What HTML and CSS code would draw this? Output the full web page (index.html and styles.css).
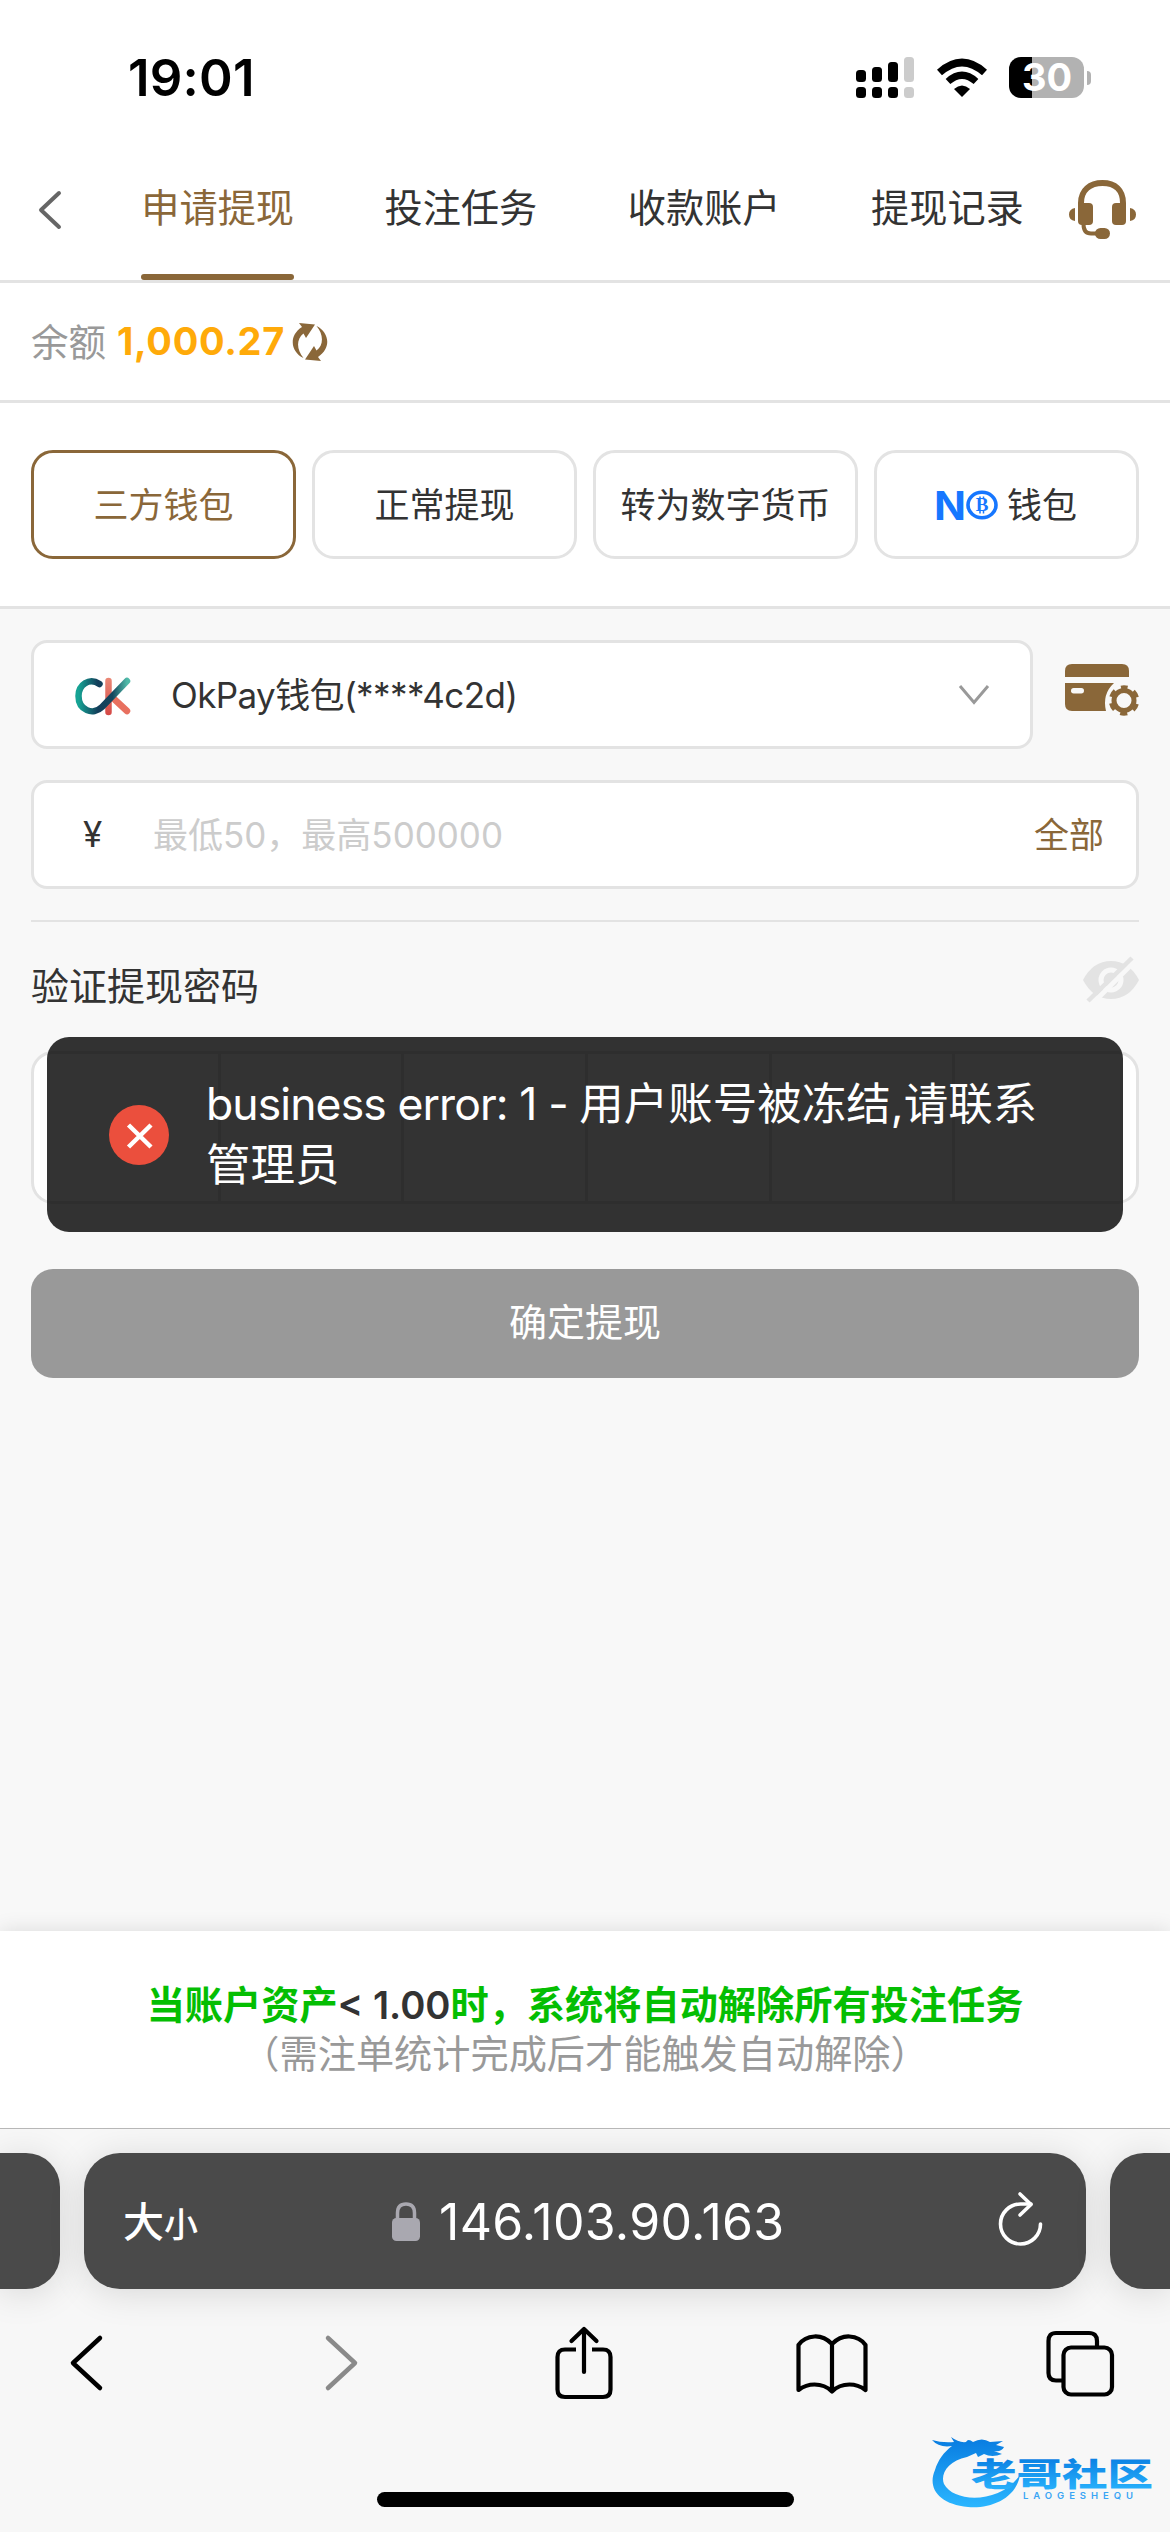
FILE: index.html
```html
<!DOCTYPE html>
<html lang="zh-CN">
<head>
    <meta charset="UTF-8">
    <meta name="viewport" content="width=device-width, initial-scale=1.0">
    <title>申请提现</title>
    <link rel="stylesheet" href="styles.css">
</head>
<body>

    <!-- 状态栏 -->
    <div class="status-bar">
        <span class="time">19:01</span>
        <div class="status-icons">
            <svg class="signal" width="59" height="42" viewBox="0 0 59 42">
                <rect x="0" y="13" width="10" height="12" rx="3.5"/>
                <rect x="16" y="10" width="10" height="15" rx="3.5"/>
                <rect x="32" y="5" width="10" height="20" rx="3.5"/>
                <rect x="48" y="0" width="10" height="25" rx="3.5" fill="#ccc"/>
                <rect x="0" y="30" width="10" height="11" rx="3.5"/>
                <rect x="16" y="30" width="10" height="11" rx="3.5"/>
                <rect x="32" y="30" width="10" height="11" rx="3.5"/>
                <rect x="48" y="30" width="10" height="11" rx="3.5" fill="#ccc"/>
            </svg>
            <svg class="wifi" width="52" height="42" viewBox="0 0 52 42">
                <path d="M3.5 15.5Q26-4.5 48.5 15.5" fill="none" stroke="#000" stroke-width="7.5"/>
                <path d="M12 24.5Q26 12 40 24.5" fill="none" stroke="#000" stroke-width="7"/>
                <path d="M18 32Q26 25 34 32L26 40Z"/>
            </svg>
            <div class="battery"><span>30</span></div>
            <div class="battery-tip"></div>
        </div>
    </div>

    <!-- 顶部导航 -->
    <div class="nav">
        <svg class="back" width="28" height="42" viewBox="0 0 28 42">
            <path d="M23 4L5 21L23 38" fill="none" stroke="#666" stroke-width="4" stroke-linecap="round" stroke-linejoin="round"/>
        </svg>
        <div class="tabs">
            <div class="tab active"><span>申请提现</span></div>
            <div class="tab"><span>投注任务</span></div>
            <div class="tab"><span>收款账户</span></div>
            <div class="tab"><span>提现记录</span></div>
        </div>
        <svg class="headset" width="67" height="60" viewBox="0 0 67 60" fill="#8a6739">
            <path d="M12 26V23C12 10 21 3 33.5 3S54 10 54 23V26" fill="none" stroke="#8a6739" stroke-width="6"/>
            <path d="M9 23H20Q24 23 24 27V41Q24 45 20 45H13Q9 45 9 41Z"/>
            <path d="M57 23H47Q43 23 43 27V41Q43 45 47 45H53Q57 45 57 41Z"/>
            <path d="M6 28V41Q0 40 0 34.5T6 28ZM61 28V41Q67 40 67 34.5T61 28Z"/>
            <path d="M14.5 44Q14.5 53.5 22 53.5H30" fill="none" stroke="#8a6739" stroke-width="4"/>
            <rect x="26" y="48" width="15" height="11" rx="5.5"/>
        </svg>
    </div>

    <!-- 余额 -->
    <div class="balance">
        <span class="balance-label">余额</span>
        <strong>1,000.27</strong>
        <svg width="36" height="38" viewBox="0 0 36 38" fill="#8a6739">
            <path d="M7 0L23 1.5L14 15L11.5 10.500C4 16 4.500 27 11.500 35C-1 29-4 13 10 4Z"/>
            <path d="M29 38L13 36.500L22 23L24.500 27.500C32 22 31.500 11 24.500 3C37 9 40 25 26 34Z"/>
        </svg>
    </div>

    <!-- 提现方式 -->
    <div class="methods">
        <div class="method selected"><span>三方钱包</span></div>
        <div class="method"><span>正常提现</span></div>
        <div class="method"><span>转为数字货币</span></div>
        <div class="method">
            <svg class="no-logo" width="62" height="30" viewBox="0 0 62 30">
                <text x="-2" y="29.500" class="no-letter" textLength="32" lengthAdjust="spacingAndGlyphs">N</text>
                <ellipse cx="46" cy="15" rx="14" ry="12.700" fill="none" stroke="#1677ff" stroke-width="3.600"/>
                <text x="46" y="21" class="no-coin">B</text>
                <path d="M44 6.500V9M47.500 6.500V9M44 21V23.500M47.500 21V23.500" stroke="#1677ff" stroke-width="1.500"/>
            </svg>
            <span>钱包</span>
        </div>
    </div>

    <!-- 提现表单 -->
    <div class="form">
        <div class="wallet-row">
            <div class="field wallet">
                <svg class="ck-logo" width="56" height="42" viewBox="0 0 56 42" fill="none" stroke-width="6.5" stroke-linecap="round">
                    <defs>
                        <linearGradient id="ckTeal" x1="0" y1="0" x2="1" y2="0">
                            <stop offset="0" stop-color="#16a394"/>
                            <stop offset=".4" stop-color="#123e5a"/>
                            <stop offset=".7" stop-color="#14465d"/>
                            <stop offset="1" stop-color="#4fb9a8"/>
                        </linearGradient>
                        <linearGradient id="ckRed" gradientUnits="userSpaceOnUse" x1="0" y1="3" x2="0" y2="38">
                            <stop offset="0" stop-color="#ea8674"/>
                            <stop offset="1" stop-color="#d54a47"/>
                        </linearGradient>
                    </defs>
                    <path d="M33.500 5V36" stroke="url(#ckRed)"/>
                    <path d="M38 22L52 35" stroke="#e8705f"/>
                    <path d="M24.500 8C14 1 3.500 9 3.500 20C3.500 34 18 40 27 31L52 5" stroke="url(#ckTeal)"/>
                </svg>
                <span class="wallet-name">OkPay钱包(****4c2d)</span>
                <svg class="chevron" width="32" height="22" viewBox="0 0 32 22">
                    <path d="M2 2L16 18.5L30 2" fill="none" stroke="#999" stroke-width="3"/>
                </svg>
            </div>
            <svg class="card-setting" width="74" height="54" viewBox="0 0 74 54">
                <path d="M0 14V8Q0 1 7 1H57Q64 1 64 8V14Z" fill="#8a6739"/>
                <path d="M0 20H49Q37 31 41 48H7Q0 48 0 41Z" fill="#8a6739"/>
                <rect x="6" y="25" width="13" height="5.5" rx="2.7" fill="#f8f8f8"/>
                <circle cx="59" cy="37.5" r="10" fill="none" stroke="#8a6739" stroke-width="5"/>
                <circle cx="59" cy="37.5" r="13" fill="none" stroke="#8a6739" stroke-width="4.5" stroke-dasharray="7 6.614" stroke-dashoffset="3.5" transform="rotate(-90 59 37.5)"/>
            </svg>
        </div>

        <div class="field amount">
            <span class="yen">¥</span>
            <span class="placeholder">最低50，最高500000</span>
            <span class="all">全部</span>
        </div>

        <div class="divider"></div>

        <div class="pwd-title">
            <span>验证提现密码</span>
            <svg width="56" height="48" viewBox="0 0 56 48">
                <path d="M0 24Q10 5 28 5T56 24Q46 43 28 43T0 24Z" fill="#e3e3e3"/>
                <circle cx="28" cy="24" r="10" fill="#e3e3e3" stroke="#f8f8f8" stroke-width="5"/>
                <path d="M9 48L52 5" stroke="#f8f8f8" stroke-width="5"/>
                <path d="M5 45L49 2" stroke="#e3e3e3" stroke-width="4.5"/>
            </svg>
        </div>

        <div class="pwd-wrap">
            <div class="pwd-box">
                <i></i><i></i><i></i><i></i><i></i><i></i>
            </div>
            <!-- 错误提示 -->
            <div class="toast">
                <svg width="60" height="60" viewBox="0 0 60 60">
                    <circle cx="30" cy="30" r="30" fill="#eb4f3d"/>
                    <path d="M19.5 20L42 42M42 20L19.5 42" stroke="#fff" stroke-width="4.5"/>
                </svg>
                <p><span class="code">business error: 1 - </span>用户账号被冻结,请联系<br>管理员</p>
            </div>
        </div>

        <button class="submit"><span>确定提现</span></button>
    </div>

    <!-- 底部说明 -->
    <div class="notice">
        <p class="notice-main">当账户资产<b>&lt; 1.00</b>时，系统将自动解除所有投注任务</p>
        <p class="notice-sub">（需注单统计完成后才能触发自动解除）</p>
    </div>

    <!-- 浏览器工具栏 -->
    <div class="browser">
        <div class="address-row">
            <div class="side-tab left"></div>
            <div class="address">
                <div class="text-size">大<small>小</small></div>
                <div class="url">
                    <svg width="28" height="40" viewBox="0 0 28 40">
                        <path d="M5.5 17V11Q5.5 2 14 2T22.5 11V17" fill="none" stroke="#a9a8b0" stroke-width="3.5"/>
                        <rect x="0" y="16" width="28" height="23" rx="4.5" fill="#a9a8b0"/>
                    </svg>
                    <span>146.103.90.163</span>
                </div>
                <svg class="reload" width="46" height="56" viewBox="0 0 46 56" fill="none" stroke="#fff" stroke-width="3.6" stroke-linecap="round" stroke-linejoin="round">
                    <path d="M42.5 33A20 20 0 1 1 22.5 13H33"/>
                    <path d="M22 3L33 13.5L22 24"/>
                </svg>
            </div>
            <div class="side-tab right"></div>
        </div>

        <div class="toolbar">
            <svg width="72" height="76" viewBox="0 0 72 76" fill="none" stroke="#000" stroke-width="4.5" stroke-linecap="round" stroke-linejoin="round">
                <path d="M49 14L22 39L49 64"/>
            </svg>
            <svg width="72" height="76" viewBox="0 0 72 76" fill="none" stroke="#8a8a8a" stroke-width="4.5" stroke-linecap="round" stroke-linejoin="round">
                <path d="M29 14L56 39L29 64"/>
            </svg>
            <svg width="72" height="76" viewBox="-7 0 72 76" fill="none" stroke="#000" stroke-width="4.2" stroke-linecap="round" stroke-linejoin="round">
                <path d="M21 25.500H10Q2.500 25.500 2.500 33V65.500Q2.500 73 10 73H48Q55.500 73 55.500 65.500V33Q55.500 25.500 48 25.500H37" stroke-linecap="butt"/>
                <path d="M29 48V5M16.500 17L29 5L41.500 17"/>
            </svg>
            <svg width="72" height="76" viewBox="0 -1 72 76" fill="none" stroke="#000" stroke-width="4.2" stroke-linecap="round" stroke-linejoin="round">
                <path d="M36 19Q28 11 18.500 11.500Q8 12 2.500 20V65Q10 59.500 18.500 59.500Q29 59.500 36 66.500Q43 59.500 53.500 59.500Q62 59.500 69.500 65V20Q64 12 53.500 11.500Q44 11 36 19ZM36 19V66"/>
            </svg>
            <svg width="72" height="76" viewBox="-2 -1 72 76" fill="none" stroke="#000" stroke-width="4.2">
                <path d="M51 22V16Q51 8 43 8H10Q2.500 8 2.500 16V48Q2.500 55.500 10 55.500H16"/>
                <rect x="17.500" y="22.500" width="48.500" height="47" rx="7.500"/>
            </svg>
        </div>

        <div class="home-indicator"></div>

        <svg class="watermark" width="226" height="80" viewBox="0 0 226 80">
            <defs>
                <linearGradient id="wmBlue" x1="0" y1="0" x2="0" y2="1">
                    <stop offset="0" stop-color="#087be0"/>
                    <stop offset="1" stop-color="#2bb6ff"/>
                </linearGradient>
            </defs>
            <path d="M2 10Q12 13 24 12L21 7Q29 13 36 12Q38 8 43 12Q52 7 60 12L73 11L66 15L74 17Q72 22 64 21L72 24Q62 28 54 24L48 27L46 23L37 27C18 31 10 44 14 54C24 73 70 74 90 45C86 69 60 79 38 77C9 74-3 58 5 40C8 30 14 22 22 16Q9 18 2 10Z" fill="url(#wmBlue)"/>
            <text x="41" y="55.500" class="wm-name" textLength="182" lengthAdjust="spacingAndGlyphs" fill="url(#wmBlue)">老哥社区</text>
            <text x="93" y="69" class="wm-latin" textLength="110">LAOGESHEQU</text>
        </svg>
    </div>

</body>
</html>
```

FILE: styles.css
```css
:root {
    --gold: #8a6739;
    --line: #e3e3e3;
    --text: #333;
    --gray: #999;
    --bg: #f8f8f8;
}

* {
    margin: 0;
    padding: 0;
    box-sizing: border-box;
}

body {
    width: 1170px;
    height: 2532px;
    overflow: hidden;
    display: flex;
    flex-direction: column;
    font-family: Inter, "Noto Sans CJK SC", sans-serif;
    color: var(--text);
    background: var(--bg);
}

svg {
    display: block;
    flex-shrink: 0;
}

/* 状态栏 */
.status-bar {
    height: 140px;
    flex-shrink: 0;
    padding: 0 79px 0 128px;
    display: flex;
    justify-content: space-between;
    background: #fff;
    color: #000;
}

.time {
    margin-top: 48px;
    font-size: 51px;
    line-height: 60px;
    font-weight: 600;
    letter-spacing: 0.2px;
}

.status-icons {
    display: flex;
    margin-top: 57px;
    height: 42px;
}

.wifi {
    margin: 0 21px;
}

.battery {
    width: 75px;
    height: 41px;
    border-radius: 12px;
    background: linear-gradient(to right, #000 23px, #b2b2b2 23px);
    color: #fff;
    font-size: 38px;
    line-height: 41px;
    font-weight: 700;
    text-align: center;
    padding-left: 1px;
}

.battery-tip {
    width: 4px;
    height: 14px;
    margin: 14px 0 0 3px;
    border-radius: 0 7px 7px 0;
    background: #b2b2b2;
}

/* 导航 */
.nav {
    height: 143px;
    flex-shrink: 0;
    display: flex;
    align-items: flex-start;
    background: #fff;
    border-bottom: 3px solid var(--line);
}

.back {
    margin: 49px 32px 0 36px;
}

.tabs {
    width: 973px;
    height: 140px;
    display: grid;
    grid-template-columns: repeat(4, 1fr);
}

.tab {
    display: flex;
    justify-content: center;
    font-size: 38.2px;
    line-height: 134px;
}

.tab span {
    height: 140px;
    padding-top: 1px;
}

.tab.active span {
    color: var(--gold);
}

.tab.active span::after {
    content: "";
    display: block;
    height: 6px;
    margin-top: -1px;
    border-radius: 3px;
    background: var(--gold);
}

.headset {
    margin-top: 40px;
}

/* 余额 */
.balance {
    height: 120px;
    flex-shrink: 0;
    display: flex;
    align-items: center;
    padding: 0 31px;
    background: #fff;
    border-bottom: 3px solid var(--line);
    font-size: 37.5px;
}

.balance-label {
    color: var(--gray);
    width: 86px;
    padding-bottom: 5px;
}

.balance strong {
    width: 175px;
    padding-bottom: 2px;
    color: #ffaa09;
    font-weight: 650;
    font-size: 38px;
    letter-spacing: 0.7px;
}

/* 提现方式 */
.methods {
    height: 206px;
    flex-shrink: 0;
    padding: 47px 31px 0;
    display: grid;
    grid-template-columns: repeat(4, 1fr);
    gap: 16px;
    background: #fff;
    border-bottom: 3px solid var(--line);
}

.method {
    height: 109px;
    border: 3px solid var(--line);
    border-radius: 22px;
    display: flex;
    align-items: center;
    justify-content: center;
    gap: 9px;
    font-size: 35px;
    white-space: nowrap;
}

.method span {
    padding-bottom: 4px;
}

.method.selected {
    border-color: var(--gold);
    color: var(--gold);
}

.no-logo {
    overflow: visible;
}

.no-letter {
    font-size: 40px;
    font-weight: 700;
    fill: #1677ff;
}

.no-coin {
    font-family: "Liberation Serif", serif;
    font-size: 19px;
    font-weight: 700;
    fill: #1677ff;
    text-anchor: middle;
}

/* 表单 */
.form {
    flex: 1;
    padding: 31px 31px 0;
}

.field {
    height: 109px;
    display: flex;
    align-items: center;
    background: #fff;
    border: 3px solid var(--line);
    border-radius: 16px;
    font-size: 35px;
}

.wallet-row {
    display: flex;
    justify-content: space-between;
}

.wallet {
    width: 1002px;
    padding: 0 40px 0 41px;
}

.ck-logo {
    margin-top: 4px;
}

.wallet-name {
    margin-left: 40px;
    padding-bottom: 5px;
    flex: 1;
    letter-spacing: -0.6px;
}

.card-setting {
    margin-top: 23px;
}

.amount {
    margin-top: 31px;
    padding: 0 32px 0 49px;
}

.yen {
    width: 70px;
    padding-bottom: 2px;
    color: var(--text);
}

.placeholder {
    flex: 1;
    padding-bottom: 4px;
    color: #ccc;
}

.all {
    padding-bottom: 4px;
    color: var(--gold);
}

.divider {
    height: 2px;
    margin-top: 31px;
    background: var(--line);
}

.pwd-title {
    height: 129px;
    padding-top: 34px;
    display: flex;
    justify-content: space-between;
    font-size: 38px;
    line-height: 60px;
}

.pwd-wrap {
    position: relative;
}

.pwd-box {
    height: 153px;
    display: grid;
    grid-template-columns: repeat(6, 1fr);
    background: #fff;
    border: 3px solid var(--line);
    border-radius: 22px;
}

.pwd-box i + i {
    border-left: 3px solid var(--line);
}

.toast {
    position: absolute;
    top: -14px;
    left: 16px;
    right: 16px;
    height: 195px;
    padding-left: 62px;
    display: flex;
    align-items: center;
    gap: 37px;
    border-radius: 22px;
    background: rgba(0, 0, 0, 0.8);
    color: #fff;
    font-size: 44.5px;
    line-height: 61px;
}

.toast .code {
    letter-spacing: -0.9px;
}

.submit {
    display: block;
    width: 100%;
    height: 109px;
    margin-top: 65px;
    padding-bottom: 8px;
    border: none;
    border-radius: 22px;
    background: #999;
    color: #fff;
    font-family: inherit;
    font-size: 38px;
}

/* 底部说明 */
.notice {
    height: 197px;
    flex-shrink: 0;
    padding-top: 50px;
    text-align: center;
    font-size: 38.2px;
    line-height: 49px;
    background: #fff;
    box-shadow: 0 0 20px rgba(0, 0, 0, 0.12);
    white-space: nowrap;
}

.notice-main {
    color: #04be02;
    font-weight: 600;
}

.notice-main b {
    font-weight: 600;
    color: var(--text);
}

.notice-sub {
    color: var(--gray);
}

/* 浏览器 */
.browser {
    position: relative;
    height: 404px;
    flex-shrink: 0;
    border-top: 1px solid #b8b8b8;
    background: #f7f7f7;
}

.address-row {
    display: flex;
    justify-content: space-between;
    padding-top: 24px;
}

.side-tab,
.address {
    height: 136px;
    background: #4a4a4a;
    box-shadow: 0 4px 36px rgba(0, 0, 0, 0.13);
}

.side-tab {
    width: 60px;
}

.side-tab.left {
    border-radius: 0 34px 34px 0;
}

.side-tab.right {
    border-radius: 34px 0 0 34px;
}

.address {
    width: 1002px;
    padding: 0 42px 0 39px;
    border-radius: 36px;
    display: flex;
    align-items: center;
    color: #fff;
}

.text-size {
    width: 269px;
    padding-bottom: 4px;
    font-size: 41px;
    font-weight: 500;
    white-space: nowrap;
}

.text-size small {
    font-size: 34px;
}

.url {
    flex: 1;
    display: flex;
    align-items: center;
    gap: 19px;
    padding-top: 1px;
    font-size: 50px;
    letter-spacing: 0.3px;
}

.reload {
    margin-top: -4px;
}

.toolbar {
    display: flex;
    justify-content: space-between;
    padding: 35px 54px 0 51px;
}

.home-indicator {
    width: 417px;
    height: 15px;
    margin: 92px auto 0;
    border-radius: 8px;
    background: #000;
}

.watermark {
    position: absolute;
    right: 14px;
    bottom: 22px;
}

.wm-name {
    font-size: 32px;
    font-weight: 900;
}

.wm-latin {
    font-size: 9.5px;
    font-weight: 600;
    fill: #3aa5f5;
}
```
